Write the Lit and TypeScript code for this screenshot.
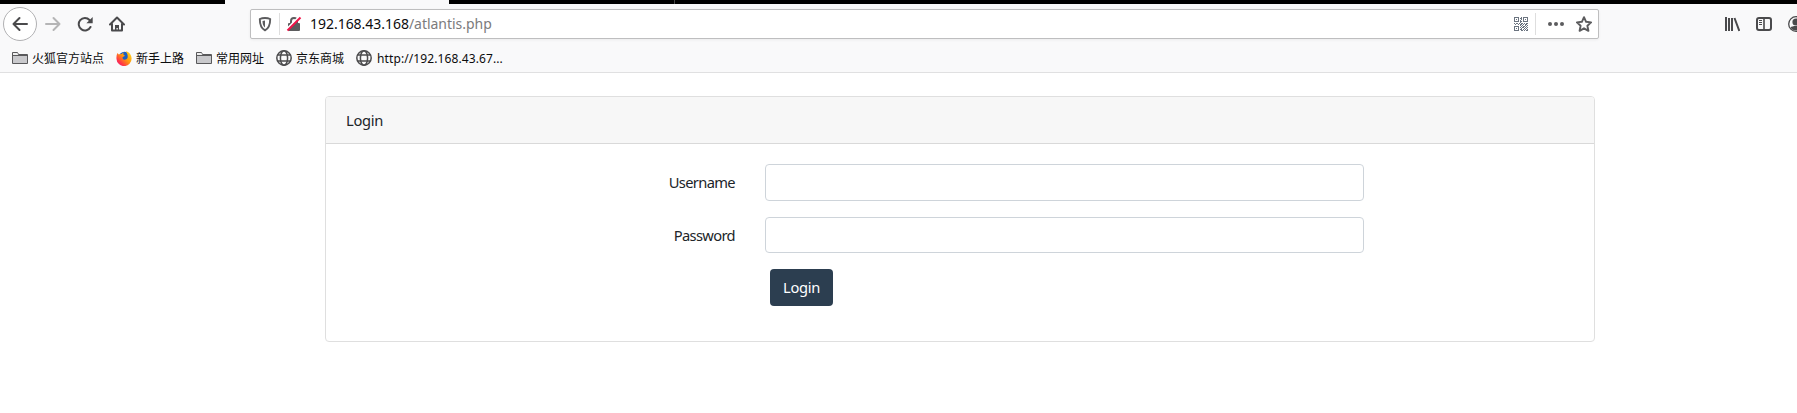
import { LitElement, html, css, svg } from "lit";
import { customElement } from "lit/decorators.js";

const QR = [
  "11111001011111",
  "10001011010001",
  "10101001010101",
  "10001010010001",
  "11111011011111",
  "00000010000000",
  "10110101101011",
  "01001011010110",
  "00000010100101",
  "11111001011010",
  "10001010110101",
  "10101001001010",
  "10001011010101",
  "11111001101011",
];

const folder = html`<svg class="i16" viewBox="0 0 16 16"><path d="M.5 13.500v-11h5l1 2h9v9z" fill="#c9c9cc" stroke="#59595b"/><path d="M1 5.500h14.500" stroke="#59595b"/><path d="M1 3h4.200l.8 2H1z" fill="#eee"/></svg>`;
const globe = html`<svg class="i16" viewBox="0 0 16 16" fill="none" stroke="#4c4c4e" stroke-width="1.500"><circle cx="8" cy="8" r="7.200"/><ellipse cx="8" cy="8" rx="3.600" ry="7.200"/><path d="M1.500 5h13M1.500 11h13"/></svg>`;
const fox = html`<svg class="i16" viewBox="0 0 16 16">
  <defs><linearGradient id="f" x1="1" y1="0" x2="0" y2="1"><stop offset="0" stop-color="#ffe226"/><stop offset=".45" stop-color="#ff980e"/><stop offset=".75" stop-color="#ff3647"/><stop offset="1" stop-color="#e31587"/></linearGradient></defs>
  <circle cx="8.500" cy="7.500" r="5.800" fill="#1a5fc4"/>
  <path d="M1.500 3 2.800 4.600C3.600 4 4.500 3.800 5.500 4L7.500 2.500 7.300 4.600 9 5.800 6.600 7.200C6.200 9.500 8.500 10.300 10.300 9.200 12.500 8 12 4 9.500 1 13 1.800 15.600 5 15.600 8.500A7.500 7.300 0 0 1 .5 9C.3 6.500.6 4.500 1.500 3z" fill="url(#f)"/></svg>`;

@customElement("app-root")
export class AppRoot extends LitElement {
  static styles = css`
    :host { display: block; height: 413px; overflow: hidden; background: #fff;
      font-family: "Noto Sans", "Noto Sans CJK SC", sans-serif; color: #212529; }
    * { box-sizing: border-box; }
    svg { display: block; flex: none; }
    .i16 { width: 16px; height: 16px; }
    .chrome { height: 73px; background: #f9f9fa; border-bottom: 1px solid #e0e0e1; overflow: hidden; }
    .tabs { display: flex; height: 4px; background: #000; }
    .tab { margin-left: 225px; width: 224px; background: #f9f9fa; }
    .sep { margin-left: 225px; width: 1px; background: #444; }
    .nav { display: flex; height: 40px; align-items: center; padding-left: 3px; }
    .back { width: 34px; height: 34px; border: 1px solid #b1b1b3; border-radius: 50%; background: #fff;
      display: grid; place-items: center; flex: none; }
    .fwd { margin-left: 8px; }
    .reload { margin-left: 16px; }
    .home { margin-left: 16px; }
    .url { margin-left: 125px; flex: none; width: 1349px; height: 30px; display: flex; align-items: center; background: #fff;
      border: 1px solid #bebebf; border-radius: 2px; box-shadow: 0 1px 3px rgba(0,0,0,.06); padding-left: 6px; }
    .bar { width: 1px; height: 22px; background: #dedede; }
    .lock { margin: 0 8px 0 6px; }
    .shield { margin-right: 6px; }
    .addr { flex: 1; font-size: 14px; line-height: 20px; color: #0c0c0d; white-space: nowrap; letter-spacing: -.03px; }
    .path { color: #7b7b7c; }
    .qrbar { margin-left: 7px; }
    .dots { margin-left: 12px; }
    .star { margin: 0 6px 0 12px; }
    .lib { margin-left: 125px; }
    .side { margin-left: 16px; }
    .acct { margin-left: 16px; }
    .marks { display: flex; height: 28px; align-items: center; padding-left: 12px; font-size: 12px; color: #0c0c0d; }
    .mark { display: flex; align-items: center; gap: 4px; margin-right: 12px; white-space: nowrap; }
    .link { gap: 5px; letter-spacing: .1px; }
    .card { margin: 23px 0 0 325px; width: 1270px; height: 246px; border: 1px solid #dfdfdf; border-radius: 4px;
      font-size: 14.700px; letter-spacing: -.3px; line-height: 23px; overflow: hidden; }
    .head { height: 47px; padding: 12px 20px; background: #f7f7f7; border-bottom: 1px solid #d9d9d9; }
    .form { padding-top: 20px; display: grid; grid-template-columns: 409px 599px; column-gap: 30px; grid-template-rows: 37px 36px 37px; row-gap: 16px; }
    .label { text-align: right; padding-top: 7px; letter-spacing: -.65px; }
    .input { width: 599px; height: 100%; border: 1px solid #ced4da; border-radius: 4px; background: #fff; outline: none; }
    .btn { grid-column: 2; margin-left: 5px; width: 63px; border: 0; border-radius: 4px; padding: 0; background: #2c3e50; color: #fff;
      font: inherit; letter-spacing: inherit; }
  `;

  render() {
    return html`
      <header class="chrome">
        <div class="tabs"><div class="tab"></div><div class="sep"></div></div>
        <nav class="nav">
          <div class="back"><svg class="i16" viewBox="0 0 16 16" fill="none" stroke="#4a4a4c" stroke-width="2" stroke-linecap="round" stroke-linejoin="round"><path d="M15 8H1.500M7.500 2 1.500 8l6 6"/></svg></div>
          <svg class="i16 fwd" viewBox="0 0 16 16" fill="none" stroke="#b5b5b6" stroke-width="2" stroke-linecap="round" stroke-linejoin="round"><path d="M1 8h13.500M8.500 2l6 6-6 6"/></svg>
          <svg class="i16 reload" viewBox="0 0 16 16"><path d="M13.500 11A6.200 6.200 0 1 1 12.500 4" fill="none" stroke="#4a4a4c" stroke-width="2" stroke-linecap="round"/><path d="M15.700 1v6.300H9.400z" fill="#4a4a4c"/></svg>
          <svg class="i16 home" viewBox="0 0 16 16"><path d="M1 8.500 8 1.500l7 7M3 8v6.500h10V8" fill="none" stroke="#4a4a4c" stroke-width="2" stroke-linecap="round" stroke-linejoin="round"/><path d="M6 14V9h4v5H8.800v-2H7.500v2z" fill="#4a4a4c"/></svg>
          <div class="url">
            <svg class="i16 shield" viewBox="0 0 16 16"><path d="M8 2c2 0 3.700.3 5.200 1 0 5-.5 9-5.200 11.300C3.300 12 2.800 8 2.800 3 4.300 2.300 6 2 8 2z" fill="none" stroke="#5c5c5e" stroke-width="1.900" stroke-linejoin="round"/><path d="M8 4.500v7C6 10 5.500 8 5.500 5z" fill="#5c5c5e"/></svg>
            <div class="bar"></div>
            <svg class="i16 lock" viewBox="0 0 16 16"><path d="M5 8V5a3 3 0 0 1 6 0v3" fill="none" stroke="#5c5c5e" stroke-width="2"/><rect x="2" y="7" width="12" height="8" rx="1" fill="#5c5c5e"/><path d="M.5 13.500 13.500.5" stroke="#fff" stroke-width="2"/><path d="M1.500 14.500 14.500 1.500" stroke="#f0154a" stroke-width="2"/></svg>
            <div class="addr">192.168.43.168<span class="path">/atlantis.php</span></div>
            <svg width="14" height="14" viewBox="0 0 14 14" fill="#6b7480" shape-rendering="crispEdges">${QR.map((r, y) => [...r].map((c, x) => c === "1" ? svg`<rect x=${x} y=${y} width="1" height="1"/>` : null))}</svg>
            <div class="bar qrbar"></div>
            <svg class="i16 dots" viewBox="0 0 16 16" fill="#5c5c5e"><circle cx="2" cy="8" r="2"/><circle cx="8" cy="8" r="2"/><circle cx="14" cy="8" r="2"/></svg>
            <svg class="i16 star" viewBox="0 0 16 16"><path d="M8 1.200l2.100 4.600 5 .6-3.700 3.400 1 5L8 12.300l-4.400 2.500 1-5L.9 6.400l5-.6z" fill="none" stroke="#5c5c5e" stroke-width="1.900" stroke-linejoin="round"/></svg>
          </div>
          <svg class="i16 lib" viewBox="0 0 16 16" fill="none" stroke="#4a4a4c" stroke-width="2"><path d="M2 1v14M5 2v13M8 2v13M10.500 2l4.800 13"/></svg>
          <svg class="i16 side" viewBox="0 0 16 16" fill="none" stroke="#4a4a4c"><rect x="1" y="2" width="14" height="12" rx="2" stroke-width="2"/><path d="M8 2v12" stroke-width="1.600"/><path d="M3 4.500h3M3 6.500h3M3 8.500h3"/></svg>
          <svg class="i16 acct" viewBox="0 0 16 16"><circle cx="8" cy="8" r="7.300" fill="none" stroke="#4a4a4c" stroke-width="1.300"/><circle cx="8" cy="6" r="3.600" fill="#4a4a4c"/><path d="M2.500 11.500c1-2 10-2 11 0-2 4-9 4-11 0z" fill="#4a4a4c"/></svg>
        </nav>
        <div class="marks">
          <div class="mark">${folder}火狐官方站点</div>
          <div class="mark">${fox}新手上路</div>
          <div class="mark">${folder}常用网址</div>
          <div class="mark">${globe}京东商城</div>
          <div class="mark link">${globe}http://192.168.43.67...</div>
        </div>
      </header>
      <main class="card">
        <div class="head">Login</div>
        <form class="form" @submit=${(e: Event) => e.preventDefault()}>
          <label class="label" for="u">Username</label><input class="input" id="u" type="text">
          <label class="label" for="p">Password</label><input class="input" id="p" type="password">
          <button class="btn">Login</button>
        </form>
      </main>`;
  }
}
